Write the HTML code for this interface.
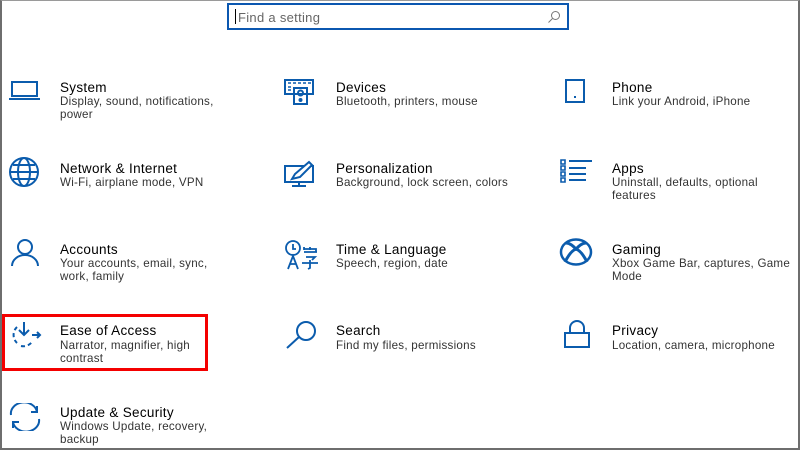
<!DOCTYPE html>
<html><head><meta charset="utf-8"><style>
*{margin:0;padding:0;box-sizing:border-box}
body{width:800px;height:450px;background:#fff;position:relative;overflow:hidden;font-family:"Liberation Sans",sans-serif}
.frame{position:absolute;left:0;top:0;width:800px;height:450px;border:2px solid #6e6e6e;border-top:1px solid #9a9a9a}
.search{position:absolute;left:227px;top:3px;width:342px;height:27px;border:2px solid #0b57b0;}
.search span{position:absolute;left:9px;top:5px;font-size:13px;color:#666;letter-spacing:.3px}
.search .cur{position:absolute;left:6px;top:4px;width:1px;height:15px;background:#000}
.t{position:absolute;font-size:13.5px;color:#000;letter-spacing:.3px}
.d{position:absolute;font-size:11.6px;color:#333;line-height:12.5px;letter-spacing:.25px}
svg{position:absolute;fill:none;stroke:#0b5cad;stroke-width:2}
.red{position:absolute;left:2px;top:314px;width:206px;height:57px;border:3px solid #f40000}
</style></head><body>
<div class="frame"></div>
<div class="search"><div class="cur"></div><span>Find a setting</span>
<svg style="left:318px;top:5px" width="14" height="14" viewBox="0 0 14 14"><circle cx="8.5" cy="5.5" r="4" stroke-width="1" stroke="#777"/><path d="M5.5 8.5L1.5 12.5" stroke-width="1" stroke="#777"/></svg></div>

<svg style="left:8px;top:80px" width="34" height="22"><path d="M4 2h25v14H4z M1 19h31"/></svg>
<div class="t" style="left:60px;top:80px">System</div>
<div class="d" style="left:60px;top:96px">Display, sound, notifications,<br>power</div>

<svg style="left:8px;top:157px" width="34" height="30"><circle cx="16" cy="15" r="14"/><ellipse cx="16" cy="15" rx="6" ry="14"/><path d="M2 15h28M5 8h22M5 22h22"/></svg>
<div class="t" style="left:60px;top:161px">Network &amp; Internet</div>
<div class="d" style="left:60px;top:177px">Wi-Fi, airplane mode, VPN</div>

<svg style="left:10px;top:239px" width="30" height="30"><circle cx="15" cy="8" r="7"/><path d="M2 27a13 11 0 0 1 26 0"/></svg>
<div class="t" style="left:60px;top:242px">Accounts</div>
<div class="d" style="left:60px;top:258px">Your accounts, email, sync,<br>work, family</div>

<div class="red"></div>
<svg style="left:8px;top:320px" width="34" height="30"><path d="M16 2v13M11 10l5 5 5-5M24 15h8M29 12l3 3-3 3" /><path d="M9 7a11 11 0 0 0 0 16M13 26a11 11 0 0 0 11-4" stroke-dasharray="4 3"/></svg>
<div class="t" style="left:60px;top:323px">Ease of Access</div>
<div class="d" style="left:60px;top:340px">Narrator, magnifier, high<br>contrast</div>

<svg style="left:8px;top:403px" width="34" height="28"><path d="M3 12a13 11 0 0 1 26-3M29 3v6h-6M31 16a13 11 0 0 1-26 3M5 25v-6h6"/></svg>
<div class="t" style="left:60px;top:405px">Update &amp; Security</div>
<div class="d" style="left:60px;top:421px">Windows Update, recovery,<br>backup</div>

<svg style="left:284px;top:78px" width="34" height="28"><path d="M1 2h28v14H1z M10 10h13v16H10z" fill="#fff"/><circle cx="16.5" cy="15" r="2.5"/><circle cx="16.5" cy="22" r="1"/><path d="M4 5h3M9 5h3M14 5h3M19 5h3M24 5h3M4 9h3M4 12h3" stroke-width="1.5"/></svg>
<div class="t" style="left:336px;top:80px">Devices</div>
<div class="d" style="left:336px;top:96px">Bluetooth, printers, mouse</div>

<svg style="left:284px;top:160px" width="34" height="28"><path d="M1 6h28v16H1z M8 26h14M15 22v4" /><path d="M8 19l3-5 14-12 3 3-12 12z" fill="#fff"/></svg>
<div class="t" style="left:336px;top:161px">Personalization</div>
<div class="d" style="left:336px;top:177px">Background, lock screen, colors</div>

<svg style="left:284px;top:239px" width="36" height="32"><circle cx="9" cy="9" r="7" stroke-width="1.8"/><path d="M9 5v5h3" stroke-width="1.8"/><path d="M4 30l5-13 5 13M6 25h6M20 13h13M22 18h9l-3 3M26 21v8l-2 1M18 24h16M20 8v3M26 8v3M20 10h12v3" stroke-width="1.8"/></svg>
<div class="t" style="left:336px;top:242px">Time &amp; Language</div>
<div class="d" style="left:336px;top:258px">Speech, region, date</div>

<svg style="left:284px;top:320px" width="36" height="30"><circle cx="22" cy="11" r="9"/><path d="M15 17L3 28"/></svg>
<div class="t" style="left:336px;top:323px">Search</div>
<div class="d" style="left:336px;top:340px">Find my files, permissions</div>

<svg style="left:564px;top:78px" width="24" height="26"><path d="M2 2h18v22H2z M10 19h2"/></svg>
<div class="t" style="left:612px;top:80px">Phone</div>
<div class="d" style="left:612px;top:96px">Link your Android, iPhone</div>

<svg style="left:559px;top:158px" width="36" height="26"><path d="M2 2h4v4H2zM2 8h4v4H2zM2 14h4v4H2zM2 20h4v4H2z" stroke-width="1.6"/><path d="M10 3h23M10 10h17M10 16h17M10 22h17"/></svg>
<div class="t" style="left:612px;top:161px">Apps</div>
<div class="d" style="left:612px;top:177px">Uninstall, defaults, optional<br>features</div>

<svg style="left:559px;top:238px" width="36" height="30"><ellipse cx="17" cy="14" rx="15" ry="12.5" stroke-width="2.5"/><path d="M6 24c4-8 8-12 11-13 3 1 7 5 11 13M7 5c4 0 7 3 10 6 3-3 6-6 10-6" stroke-width="3"/></svg>
<div class="t" style="left:612px;top:242px">Gaming</div>
<div class="d" style="left:612px;top:258px">Xbox Game Bar, captures, Game<br>Mode</div>

<svg style="left:562px;top:319px" width="30" height="30"><path d="M3 14h24v14H3z M8 14V9a7 7 0 0 1 14 0v5"/></svg>
<div class="t" style="left:612px;top:323px">Privacy</div>
<div class="d" style="left:612px;top:340px">Location, camera, microphone</div>
</body></html>
